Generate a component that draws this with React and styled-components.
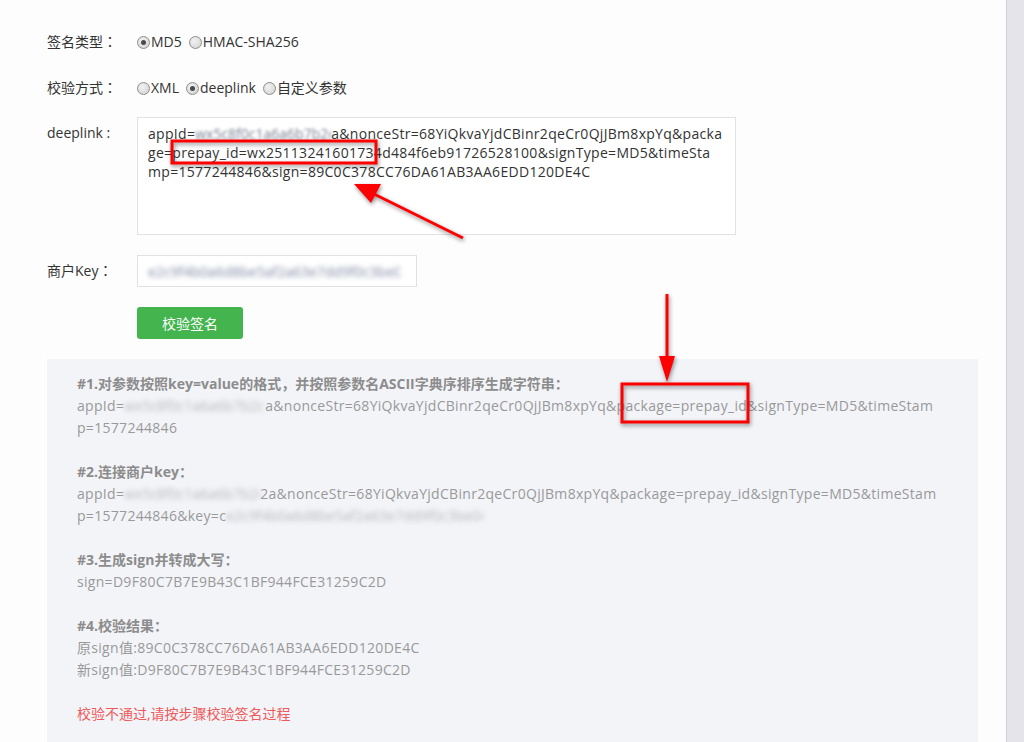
import styled, { createGlobalStyle } from 'styled-components';

const GlobalStyle = createGlobalStyle`
  html, body {
    margin: 0;
    padding: 0;
    background-color: #e4e4ea;
    font-family: "Open Sans", "Noto Sans CJK SC", sans-serif;
    font-size: 14px;
  }
`;

const Page = styled.div`
  position: relative;
  width: 1007px;
  height: 742px;
  background-color: #fdfdfd;
  border-right: 1px solid #d2d2d8;
  padding: 32px 0 0 47px;
  box-sizing: border-box;
  overflow: hidden;
`;

const Row = styled.div`
  display: flex;
  align-items: ${(props) => props.align || 'center'};
  margin-bottom: ${(props) => props.mb || '20px'};
  color: #333;
`;

const Label = styled.div`
  width: 90px;
  height: 20px;
  flex-shrink: 0;
  line-height: 20px;
  padding-top: ${(props) => props.pt || '0'};
`;

const Colon = styled.span`
  font-family: "Noto Sans CJK TC", sans-serif;
  line-height: 1;
`;

const Options = styled.div`
  display: flex;
  align-items: center;
  height: 20px;
  line-height: 20px;
`;

const Option = styled.label`
  display: flex;
  align-items: center;
  margin-right: 7px;
`;

const Radio = styled.span`
  width: 13px;
  height: 13px;
  border-radius: 50%;
  border: 1px solid #8e8e8e;
  background: radial-gradient(circle at 40% 35%, #f2f2f2, #cfcfcf);
  margin-right: 1px;
  display: flex;
  align-items: center;
  justify-content: center;
  box-sizing: border-box;

  &::after {
    content: '';
    width: 5px;
    height: 5px;
    border-radius: 50%;
    background-color: ${(props) => (props.checked ? '#4a4a4a' : 'transparent')};
  }
`;

const TextArea = styled.div`
  width: 599px;
  height: 118px;
  box-sizing: border-box;
  border: 1px solid #e2e2e2;
  background-color: #fff;
  padding: 6px 0 0 10px;
  line-height: 19px;
  color: #333;
`;

const Line = styled.div`
  white-space: nowrap;
  letter-spacing: 0.3px;
`;

const Blur = styled.span`
  display: inline-block;
  width: ${(props) => props.w || '140px'};
  overflow: hidden;
  vertical-align: bottom;
  color: ${(props) => props.color || '#b8b8b8'};
  filter: blur(${(props) => props.amount || '2.5px'});
  white-space: nowrap;
  letter-spacing: 0;
`;

const Input = styled.div`
  width: 280px;
  height: 32px;
  box-sizing: border-box;
  border: 1px solid #e2e2e2;
  background-color: #fff;
  padding-left: 10px;
  display: flex;
  align-items: center;
`;

const Button = styled.button`
  width: 106px;
  height: 32px;
  margin-left: 90px;
  border: none;
  border-radius: 3px;
  background-color: #43b44e;
  color: #fff;
  font-family: inherit;
  font-size: 14px;
  padding: 0;
`;

const Result = styled.div`
  width: 931px;
  box-sizing: border-box;
  background-color: #f3f4f8;
  padding: 14px 30px 40px 30px;
  line-height: 22px;
  color: #999;
`;

const Step = styled.div`
  margin-bottom: 22px;
`;

const StepTitle = styled.div`
  font-weight: bold;
  color: #8c8c8c;
`;

const Fail = styled.div`
  color: #ee5a5a;
`;

const Overlay = styled.svg`
  position: absolute;
  left: 0;
  top: 0;
  width: 1007px;
  height: 742px;
  pointer-events: none;
  filter: drop-shadow(1px 2px 2px rgba(0, 0, 0, 0.45));
`;

const App = () => (
  <>
    <GlobalStyle />
    <Page>
      <Row mb="26px">
        <Label>签名类型<Colon>：</Colon></Label>
        <Options>
          <Option>
            <Radio checked />
            MD5
          </Option>
          <Option>
            <Radio />
            HMAC-SHA256
          </Option>
        </Options>
      </Row>
      <Row mb="19px">
        <Label>校验方式<Colon>：</Colon></Label>
        <Options>
          <Option>
            <Radio />
            XML
          </Option>
          <Option>
            <Radio checked />
            deeplink
          </Option>
          <Option>
            <Radio />
            自定义参数
          </Option>
        </Options>
      </Row>
      <Row align="flex-start">
        <Label pt="6px">deeplink :</Label>
        <TextArea>
          <Line>
            appId=<Blur w="136px" color="#7a8094" amount="1.6px">wx5c8f0c1a6a6b7b2c9</Blur>a&amp;nonceStr=68YiQkvaYjdCBinr2qeCr0QjJBm8xpYq&amp;packa
          </Line>
          <Line>ge=prepay_id=wx25113241601734d484f6eb91726528100&amp;signType=MD5&amp;timeSta</Line>
          <Line>mp=1577244846&amp;sign=89C0C378CC76DA61AB3AA6EDD120DE4C</Line>
        </TextArea>
      </Row>
      <Row>
        <Label>商户Key<Colon>：</Colon></Label>
        <Input>
          <Blur w="252px" color="#7f88a4">e2c9f4b0a6d8be5af2a63e7dd9f0c3be04b6</Blur>
        </Input>
      </Row>
      <Row>
        <Button type="button">校验签名</Button>
      </Row>
      <Result>
        <Step>
          <StepTitle>#1.对参数按照key=value的格式，并按照参数名ASCII字典序排序生成字符串：</StepTitle>
          <Line>
            appId=<Blur w="141px">wx5c8f0c1a6a6b7b2c9</Blur>a&amp;nonceStr=68YiQkvaYjdCBinr2qeCr0QjJBm8xpYq&amp;package=prepay_id&amp;signType=MD5&amp;timeStam
          </Line>
          <Line>p=1577244846</Line>
        </Step>
        <Step>
          <StepTitle>#2.连接商户key：</StepTitle>
          <Line>
            appId=<Blur w="136px">wx5c8f0c1a6a6b7b2c9</Blur>2a&amp;nonceStr=68YiQkvaYjdCBinr2qeCr0QjJBm8xpYq&amp;package=prepay_id&amp;signType=MD5&amp;timeStam
          </Line>
          <Line>
            p=1577244846&amp;key=c<Blur w="258px">e2c9f4b0a6d8be5af2a63e7dd9f0c3be04b6</Blur>
          </Line>
        </Step>
        <Step>
          <StepTitle>#3.生成sign并转成大写：</StepTitle>
          <Line>sign=D9F80C7B7E9B43C1BF944FCE31259C2D</Line>
        </Step>
        <Step>
          <StepTitle>#4.校验结果：</StepTitle>
          <Line>原sign值:89C0C378CC76DA61AB3AA6EDD120DE4C</Line>
          <Line>新sign值:D9F80C7B7E9B43C1BF944FCE31259C2D</Line>
        </Step>
        <Fail>校验不通过,请按步骤校验签名过程</Fail>
      </Result>

      <Overlay viewBox="0 0 1007 742">
        <g fill="none" stroke="#ff0000" strokeWidth="3">
          <rect x="172" y="141" width="204" height="22" />
          <rect x="622" y="384" width="126" height="38" />
          <line x1="463" y1="238" x2="374" y2="194" />
          <line x1="667" y1="294" x2="667" y2="358" />
        </g>
        <g fill="#ff0000">
          <polygon points="354,184 381,184 371,203" />
          <polygon points="667,382 659,356 675,356" />
        </g>
      </Overlay>
    </Page>
  </>
);

export default App;
